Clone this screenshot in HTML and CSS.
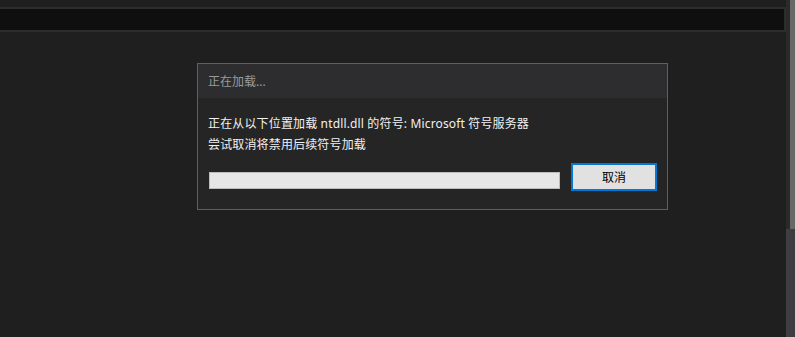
FILE: index.html
```html
<!DOCTYPE html>
<html>
<head>
  <title>正在加载</title>
  <meta charset="UTF-8">
  <link rel="stylesheet" href="styles.css">
</head>
<body>
  <div class="window">
    <div class="main">
      <div class="top-gap"></div>
      <div class="toolbar"></div>
      <div class="content"></div>

      <!-- 加载对话框 -->
      <div class="dialog">
        <div class="dialog-title">正在加载...</div>
        <div class="dialog-body">
          <p class="line">正在从以下位置加载 ntdll.dll 的符号: Microsoft 符号服务器</p>
          <p class="line">尝试取消将禁用后续符号加载</p>
          <div class="progress-row">
            <div class="progress"></div>
            <button class="btn-cancel">取消</button>
          </div>
        </div>
      </div>
    </div>

    <div class="scrollbar">
      <div class="scroll-upper">
        <span class="scroll-track"></span>
        <span class="scroll-thumb"></span>
      </div>
      <div class="scroll-lower"></div>
    </div>
  </div>
</body>
</html>
```

FILE: styles.css
```css
html, body {
  margin: 0;
  height: 100%;
}
body {
  background-color: #1f1f1f;
  font-family: "Noto Sans", "Noto Sans CJK SC", sans-serif;
  font-size: 12px;
  overflow: hidden;
}
.window {
  display: flex;
  height: 337px;
}
.main {
  position: relative;
  flex: 1;
  display: flex;
  flex-direction: column;
}
.top-gap {
  height: 7px;
}
.toolbar {
  height: 21px;
  background-color: #0f0f0f;
  border: 2px solid #2d2d2d;
  border-left: none;
}
.content {
  flex: 1;
}

/* 滚动条 */
.scrollbar {
  width: 9px;
  display: flex;
  flex-direction: column;
}
.scroll-upper {
  height: 229px;
  display: flex;
}
.scroll-track {
  width: 4px;
  background-color: #2a2a2a;
}
.scroll-thumb {
  flex: 1;
  background-color: #686868;
}
.scroll-lower {
  flex: 1;
  background-color: #3e3e42;
}

/* 对话框 */
.dialog {
  position: absolute;
  left: 197px;
  top: 63px;
  width: 471px;
  box-sizing: border-box;
  border: 1px solid #007acc;
  background-color: #252526;
}
.dialog-title {
  height: 32px;
  padding: 2px 10px 0;
  line-height: 32px;
  background-color: #2d2d30;
  color: #9a9a9a;
}
.dialog-body {
  padding: 15px 10px 18px;
  color: #f1f1f1;
}
.line {
  margin: 0;
  line-height: 21px;
  letter-spacing: 0.15px;
  white-space: nowrap;
}
.progress-row {
  display: flex;
  align-items: flex-start;
  gap: 11px;
  margin-top: 8px;
}
.progress {
  flex: 1;
  height: 15px;
  margin: 9px 0 0 1px;
  background-color: #e6e6e6;
  border: 1px solid #bcbcbc;
}
.btn-cancel {
  width: 86px;
  height: 28px;
  padding: 0;
  background-color: #e1e1e1;
  border: 2px solid #0078d7;
  color: #000;
  font-family: inherit;
  font-size: 12px;
  cursor: pointer;
}
```
